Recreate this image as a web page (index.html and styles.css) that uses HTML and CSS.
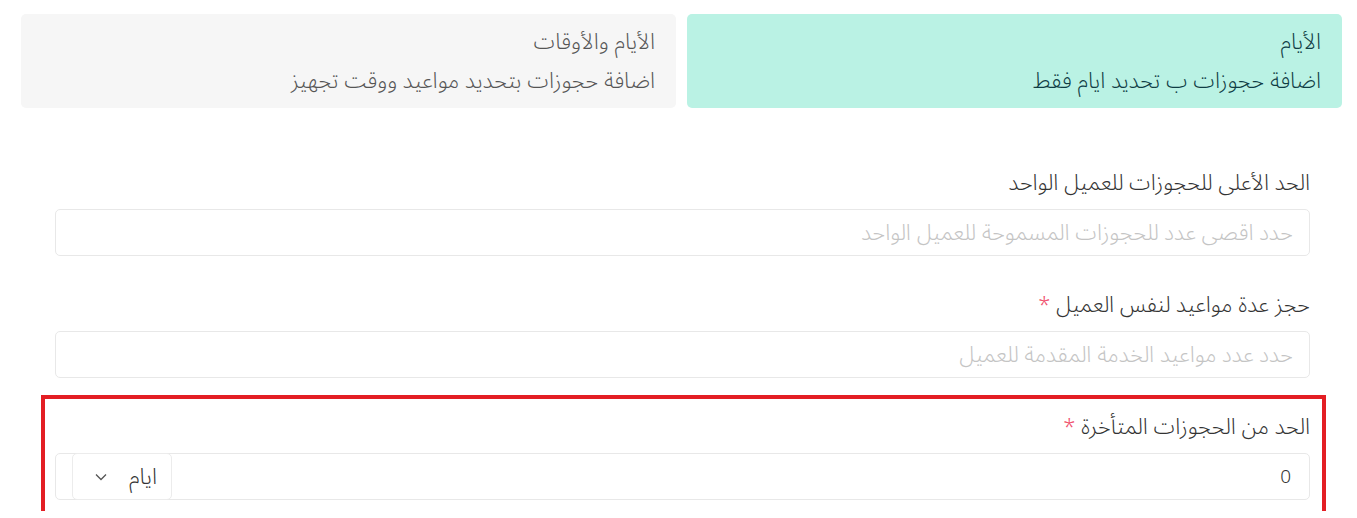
FILE: index.html
```html
<!DOCTYPE html>
<html lang="ar" dir="rtl">
<head>
<meta charset="utf-8">
<link rel="stylesheet" href="styles.css">
</head>
<body>
<div class="cards">
  <div class="card card-active">
    <div class="card-title">الأيام</div>
    <div class="card-desc">اضافة حجوزات ب تحديد ايام فقط</div>
  </div>
  <div class="card">
    <div class="card-title">الأيام والأوقات</div>
    <div class="card-desc">اضافة حجوزات بتحديد مواعيد ووقت تجهيز</div>
  </div>
</div>
<div class="form">
  <div class="field">
    <div class="label">الحد الأعلى للحجوزات للعميل الواحد</div>
    <div class="input"><span class="placeholder">حدد اقصى عدد للحجوزات المسموحة للعميل الواحد</span></div>
  </div>
  <div class="field">
    <div class="label">حجز عدة مواعيد لنفس العميل <span class="req">*</span></div>
    <div class="input"><span class="placeholder">حدد عدد مواعيد الخدمة المقدمة للعميل</span></div>
  </div>
  <div class="field field-marked">
    <div class="label">الحد من الحجوزات المتأخرة <span class="req">*</span></div>
    <div class="input input-group">
      <span class="value">0</span>
      <div class="select">
        <span>ايام</span>
        <svg width="12" height="8" viewBox="0 0 12 8"><path d="M1 1.5 L6 6.5 L11 1.5" fill="none" stroke="#555" stroke-width="1.3"/></svg>
      </div>
    </div>
  </div>
</div>
</body>
</html>
```
FILE: styles.css
```css
body {
  margin: 0;
  background: #fff;
  font-family: "Noto Sans Arabic", "Noto Sans", "DejaVu Sans", sans-serif;
  font-weight: 300;
  color: #333;
}
.cards {
  display: flex;
  gap: 11px;
  padding: 14px 15px 0 21px;
}
.card {
  flex: 1;
  height: 94px;
  box-sizing: border-box;
  background: #f6f6f6;
  border-radius: 5px;
  padding: 13px 21px 0 21px;
  color: #555;
}
.card-active {
  background: #baf2e4;
  color: #0f3d44;
}
.card-title {
  font-size: 22px;
  line-height: 30px;
}
.card-desc {
  font-size: 22px;
  line-height: 30px;
  margin-top: 9px;
}
.form {
  margin-top: 47px;
  padding: 0 35px 0 45px;
  display: flex;
  flex-direction: column;
  gap: 10px;
}
.field {
  padding: 13px 12px 11px 10px;
}
.field-marked {
  outline: 4px solid #e31e24;
}
.label {
  font-size: 22px;
  line-height: 30px;
  color: #333;
  margin-bottom: 11px;
}
.req {
  color: #f0506e;
}
.input {
  height: 47px;
  box-sizing: border-box;
  border: 1px solid #e8e8e8;
  border-radius: 5px;
  display: flex;
  align-items: center;
  padding: 0 16px;
}
.placeholder {
  font-size: 22px;
  line-height: 30px;
  color: #c4c4c4;
}
.input-group {
  justify-content: space-between;
}
.value {
  font-size: 19px;
  color: #333;
  padding-right: 2px;
}
.select {
  width: 100px;
  height: 47px;
  box-sizing: border-box;
  border: 1.5px solid #ececec;
  border-radius: 5px;
  display: flex;
  align-items: center;
  justify-content: space-between;
  padding: 0 14px 0 22px;
  font-size: 22px;
  line-height: 30px;
  color: #333;
}
```
